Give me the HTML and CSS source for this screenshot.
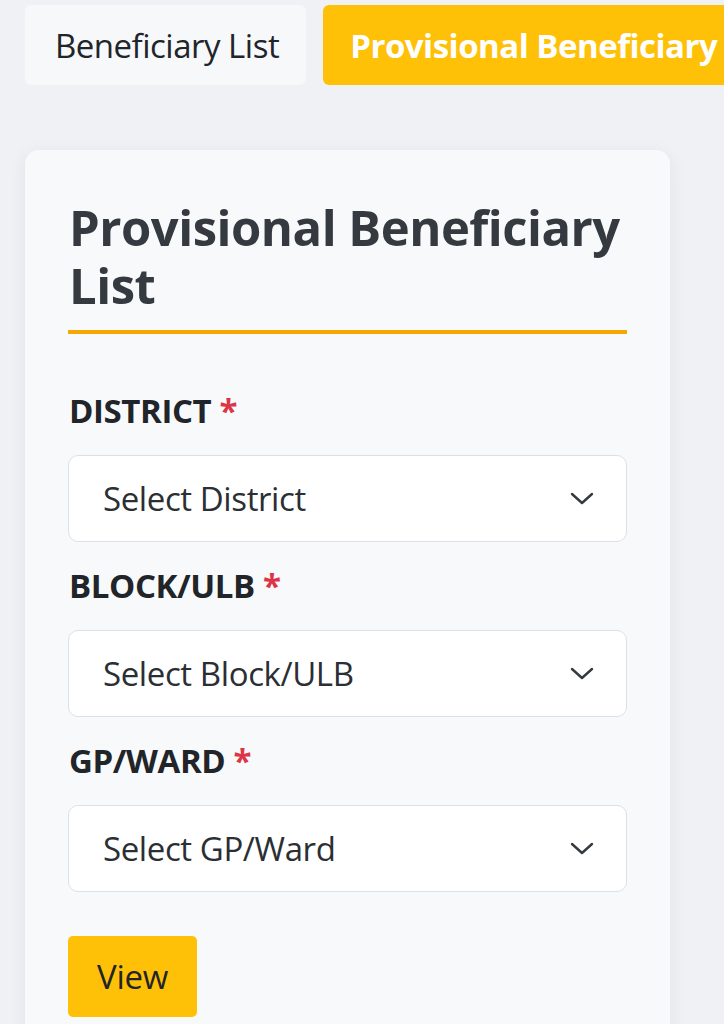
FILE: index.html
```html
<!DOCTYPE html>
<html lang="en">
<head>
<meta charset="utf-8">
<title>Provisional Beneficiary List</title>
<link rel="stylesheet" href="styles.css">
</head>
<body>
<div class="page">
  <nav class="tabs">
    <a class="tab">Beneficiary List</a>
    <a class="tab tab-active">Provisional Beneficiary</a>
  </nav>
  <section class="card">
    <h1 class="card-title">Provisional Beneficiary List</h1>
    <form class="form">
      <div class="field">
        <label class="label">DISTRICT <span class="req">*</span></label>
        <div class="select">
          <span class="select-text">Select District</span>
          <svg class="chev" viewBox="0 0 24 14" width="24" height="14"><path d="M2 2 L12 11 L22 2" fill="none" stroke="#343a40" stroke-width="2.4" stroke-linecap="round" stroke-linejoin="round"/></svg>
        </div>
      </div>
      <div class="field">
        <label class="label">BLOCK/ULB <span class="req">*</span></label>
        <div class="select">
          <span class="select-text">Select Block/ULB</span>
          <svg class="chev" viewBox="0 0 24 14" width="24" height="14"><path d="M2 2 L12 11 L22 2" fill="none" stroke="#343a40" stroke-width="2.4" stroke-linecap="round" stroke-linejoin="round"/></svg>
        </div>
      </div>
      <div class="field">
        <label class="label">GP/WARD <span class="req">*</span></label>
        <div class="select">
          <span class="select-text">Select GP/Ward</span>
          <svg class="chev" viewBox="0 0 24 14" width="24" height="14"><path d="M2 2 L12 11 L22 2" fill="none" stroke="#343a40" stroke-width="2.4" stroke-linecap="round" stroke-linejoin="round"/></svg>
        </div>
      </div>
      <div class="actions">
        <button type="button" class="btn">View</button>
      </div>
    </form>
  </section>
</div>
</body>
</html>
```

FILE: styles.css
```css
html, body {
  margin: 0;
  padding: 0;
  height: 100%;
  overflow: hidden;
}
body {
  background: #eff1f5;
  font-family: "Open Sans", "Noto Sans", sans-serif;
  color: #212529;
}
.page {
  padding: 5px 0 0 25px;
}
.tabs {
  display: flex;
  gap: 17px;
  white-space: nowrap;
}
.tab {
  flex: none;
  height: 80px;
  display: flex;
  align-items: center;
  padding: 0 27px 0 30px;
  background: #f7f8fa;
  border-radius: 6px;
  font-size: 33px;
  color: #212529;
  letter-spacing: -0.5px;
}
.tab-active {
  background: #ffc107;
  color: #ffffff;
  font-weight: 700;
  padding-left: 27px;
  padding-right: 40px;
}
.card {
  margin-top: 65px;
  width: 645px;
  box-sizing: border-box;
  background: #f8f9fa;
  border-radius: 14px;
  box-shadow: 0 4px 18px rgba(30, 40, 60, 0.07);
  padding: 48px 43px 40px 43px;
  min-height: 900px;
}
.card-title {
  margin: 0;
  font-size: 49px;
  line-height: 58px;
  font-weight: 700;
  color: #343a40;
  letter-spacing: -0.5px;
  padding: 0 0 16px 1px;
  border-bottom: 4px solid #f7a800;
}
.form {
  display: flex;
  flex-direction: column;
  margin-top: 57px;
}
.field {
  display: flex;
  flex-direction: column;
  gap: 24px;
  margin-bottom: 24px;
}
.label {
  font-size: 33px;
  line-height: 40px;
  font-weight: 700;
  color: #212529;
  letter-spacing: -0.4px;
  padding-left: 1px;
}
.req {
  color: #dc3545;
}
.select {
  height: 87px;
  box-sizing: border-box;
  background: #ffffff;
  border: 1.5px solid #dde1e6;
  border-radius: 10px;
  display: flex;
  align-items: center;
  justify-content: space-between;
  padding: 0 32px 0 34px;
}
.select-text {
  font-size: 33px;
  color: #2b2f33;
  letter-spacing: -0.4px;
}
.chev {
  display: block;
}
.actions {
  margin-top: 20px;
}
.btn {
  width: 129px;
  height: 81px;
  border: none;
  background: #ffc107;
  border-radius: 5px;
  font-family: inherit;
  font-size: 33px;
  color: #212529;
  padding: 0;
  letter-spacing: -0.3px;
}
```
